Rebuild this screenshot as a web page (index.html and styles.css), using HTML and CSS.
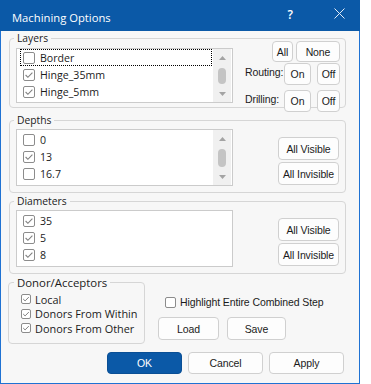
FILE: index.html
```html
<!DOCTYPE html>
<html>
<head>
<meta charset="utf-8">
<title>Machining Options</title>
<link rel="stylesheet" href="styles.css">
</head>
<body>
<div class="window">
  <div class="titlebar">
    <span class="title">Machining Options</span>
    <span class="help">?</span>
    <span class="close"><svg width="11" height="11" viewBox="0 0 11 11"><path d="M0.5 0.5L10.5 10.5M10.5 0.5L0.5 10.5" stroke="#e4ecf6" stroke-width="1" fill="none"/></svg></span>
  </div>
  <div class="client">
    <div class="group g-layers">
      <span class="legend">Layers</span>
      <div class="listbox lb-short">
        <div class="items">
          <div class="item focus"><span class="cb"></span>Border</div>
          <div class="item"><span class="cb"><svg width="10" height="10" viewBox="0 0 10 10"><path d="M1.6 5L3.9 7.3L8.4 2.6" stroke="#808080" stroke-width="1.1" fill="none"/></svg></span>Hinge_35mm</div>
          <div class="item"><span class="cb"><svg width="10" height="10" viewBox="0 0 10 10"><path d="M1.6 5L3.9 7.3L8.4 2.6" stroke="#808080" stroke-width="1.1" fill="none"/></svg></span>Hinge_5mm</div>
        </div>
        <div class="scrollbar">
          <span class="sb-btn"><svg width="7" height="4" viewBox="0 0 7 4"><polygon points="0,4 3.5,0 7,4" fill="#a3a3a3"/></svg></span>
          <span class="thumb"></span>
          <span class="sb-btn"><svg width="7" height="4" viewBox="0 0 7 4"><polygon points="0,0 3.5,4 7,0" fill="#a3a3a3"/></svg></span>
        </div>
      </div>
      <div class="layer-ctrls">
        <div class="ctl-row r1"><button class="btn b-all">All</button><button class="btn b-none">None</button></div>
        <div class="ctl-row r2"><span class="lbl">Routing:</span><button class="btn b-on">On</button><button class="btn b-off">Off</button></div>
        <div class="ctl-row r3"><span class="lbl">Drilling:</span><button class="btn b-on">On</button><button class="btn b-off">Off</button></div>
      </div>
    </div>

    <div class="group g-list">
      <span class="legend">Depths</span>
      <div class="listbox lb-tall">
        <div class="items pad1">
          <div class="item"><span class="cb"></span>0</div>
          <div class="item"><span class="cb"><svg width="10" height="10" viewBox="0 0 10 10"><path d="M1.6 5L3.9 7.3L8.4 2.6" stroke="#808080" stroke-width="1.1" fill="none"/></svg></span>13</div>
          <div class="item"><span class="cb"></span>16.7</div>
        </div>
        <div class="scrollbar">
          <span class="sb-btn"><svg width="7" height="4" viewBox="0 0 7 4"><polygon points="0,4 3.5,0 7,4" fill="#a3a3a3"/></svg></span>
          <span class="thumb thumb-tall"></span>
          <span class="sb-btn"><svg width="7" height="4" viewBox="0 0 7 4"><polygon points="0,0 3.5,4 7,0" fill="#a3a3a3"/></svg></span>
        </div>
      </div>
      <div class="vis-ctrls">
        <button class="btn b-vis">All Visible</button>
        <button class="btn b-vis">All Invisible</button>
      </div>
    </div>

    <div class="group g-list g-diam">
      <span class="legend">Diameters</span>
      <div class="listbox lb-tall">
        <div class="items pad1">
          <div class="item"><span class="cb"><svg width="10" height="10" viewBox="0 0 10 10"><path d="M1.6 5L3.9 7.3L8.4 2.6" stroke="#808080" stroke-width="1.1" fill="none"/></svg></span>35</div>
          <div class="item"><span class="cb"><svg width="10" height="10" viewBox="0 0 10 10"><path d="M1.6 5L3.9 7.3L8.4 2.6" stroke="#808080" stroke-width="1.1" fill="none"/></svg></span>5</div>
          <div class="item"><span class="cb"><svg width="10" height="10" viewBox="0 0 10 10"><path d="M1.6 5L3.9 7.3L8.4 2.6" stroke="#808080" stroke-width="1.1" fill="none"/></svg></span>8</div>
        </div>
      </div>
      <div class="vis-ctrls">
        <button class="btn b-vis">All Visible</button>
        <button class="btn b-vis">All Invisible</button>
      </div>
    </div>

    <div class="bottom">
      <div class="group g-donor">
        <span class="legend legend-donor">Donor/Acceptors</span>
        <div class="d-item"><span class="cb cb-small"><svg width="8" height="8" viewBox="0 0 8 8"><path d="M1.2 4L3.1 5.9L6.8 2.1" stroke="#808080" stroke-width="1" fill="none"/></svg></span>Local</div>
        <div class="d-item"><span class="cb cb-small"><svg width="8" height="8" viewBox="0 0 8 8"><path d="M1.2 4L3.1 5.9L6.8 2.1" stroke="#808080" stroke-width="1" fill="none"/></svg></span>Donors From Within</div>
        <div class="d-item"><span class="cb cb-small"><svg width="8" height="8" viewBox="0 0 8 8"><path d="M1.2 4L3.1 5.9L6.8 2.1" stroke="#808080" stroke-width="1" fill="none"/></svg></span>Donors From Other</div>
      </div>
      <div class="side">
        <div class="hl"><span class="cb cb-hl"></span>Highlight Entire Combined Step</div>
        <div class="ls">
          <button class="btn b-load">Load</button>
          <button class="btn b-save">Save</button>
        </div>
      </div>
    </div>

    <div class="footer">
      <button class="btn b-foot b-ok">OK</button>
      <button class="btn b-foot">Cancel</button>
      <button class="btn b-foot">Apply</button>
    </div>
  </div>
</div>
</body>
</html>
```

FILE: styles.css
```css
html, body {
  margin: 0;
  padding: 0;
  background: #ffffff;
}

.window {
  width: 360px;
  height: 384px;
  box-sizing: border-box;
  border: 1px solid #1f72d3;
  border-top: 0;
  background: #f7f7f7;
  display: flex;
  flex-direction: column;
  font-family: "Open Sans", "Noto Sans", sans-serif;
  color: #1b1b1b;
}

.titlebar {
  height: 31px;
  margin: 0 -1px;
  background: #0b59a7;
  display: flex;
  align-items: center;
  padding-right: 15px;
  color: #ffffff;
}

.title {
  margin-left: 12px;
  font-size: 11.25px;
  line-height: 16px;
  padding-top: 4px;
}

.help {
  margin-left: auto;
  font-size: 12px;
  font-weight: 600;
  line-height: 14px;
  margin-top: -2px;
}

.close {
  margin-left: 41px;
  display: flex;
  margin-top: -4px;
}

.client {
  flex: 1;
  display: flex;
  flex-direction: column;
  padding: 7px 15px 0 8px;
}

.group {
  position: relative;
  box-sizing: border-box;
  border: 1px solid #d6d6d6;
  border-radius: 4px;
  display: flex;
  align-items: flex-start;
  width: 337px;
}

.legend {
  position: absolute;
  top: -8px;
  left: 4px;
  padding: 0 3px;
  background: #f7f7f7;
  font-size: 10.3px;
  line-height: 15px;
  color: #1b1b1b;
}

.g-layers {
  height: 70px;
  padding: 2px 5px 0 6px;
}

.g-layers .listbox {
  margin-top: 7px;
}

.g-list {
  height: 73px;
  margin-top: 12px;
  padding: 8px 5px 0 6px;
}

.g-diam {
  margin-top: 8px;
}

.listbox {
  box-sizing: border-box;
  width: 217px;
  background: #ffffff;
  border: 1px solid #cbcbcb;
  display: flex;
}

.lb-short {
  height: 55px;
}

.lb-tall {
  height: 57px;
}

.items {
  flex: 1;
  padding-left: 3px;
  margin-right: 1px;
}

.items.pad1 {
  padding-top: 1px;
}

.item {
  box-sizing: border-box;
  height: 17px;
  display: flex;
  align-items: center;
  padding-left: 2px;
  border: 1px dotted transparent;
  font-size: 10.6px;
  color: #1b1b1b;
}

.item.focus {
  border-color: #000000;
}

.cb {
  box-sizing: border-box;
  width: 12px;
  height: 12px;
  border: 1px solid #8c8c8c;
  border-radius: 2px;
  background: #ffffff;
  display: flex;
  align-items: center;
  justify-content: center;
  margin-right: 5px;
  flex-shrink: 0;
}

.scrollbar {
  width: 18px;
  margin-right: 1px;
  background: #f0f0f0;
  display: flex;
  flex-direction: column;
  justify-content: space-between;
  align-items: center;
}

.sb-btn {
  height: 17px;
  display: flex;
  align-items: center;
  justify-content: center;
}

.thumb {
  width: 8px;
  height: 16px;
  border-radius: 4px;
  background: #c4c4c4;
}

.thumb-tall {
  height: 18px;
}

.btn {
  box-sizing: border-box;
  margin: 0;
  padding: 0;
  background: #fdfdfd;
  border: 1px solid #d0d0d0;
  border-radius: 4px;
  font-family: "Liberation Sans", Arial, sans-serif;
  font-size: 10.5px;
  letter-spacing: -0.1px;
  color: #1b1b1b;
  display: flex;
  align-items: center;
  justify-content: center;
}

.layer-ctrls {
  margin-left: auto;
  width: 95px;
  display: flex;
  flex-direction: column;
}

.ctl-row {
  display: flex;
  justify-content: flex-end;
  align-items: flex-start;
}

.r1 {
  height: 21px;
  gap: 3px;
}

.r2 {
  margin-top: 1px;
  height: 22px;
}

.r3 {
  margin-top: 5px;
  height: 22px;
}

.b-all {
  width: 21px;
  height: 21px;
}

.b-none {
  width: 44px;
  height: 21px;
}

.lbl {
  font-family: "Liberation Sans", Arial, sans-serif;
  font-size: 10.5px;
  letter-spacing: -0.1px;
  line-height: 18px;
  margin-right: auto;
}

.b-on {
  width: 27px;
  height: 22px;
  margin-right: 6px;
}

.b-off {
  width: 23px;
  height: 22px;
}

.vis-ctrls {
  margin-left: auto;
  margin-right: 1px;
  margin-top: 8px;
  display: flex;
  flex-direction: column;
  gap: 2px;
}

.b-vis {
  width: 61px;
  height: 23px;
}

.bottom {
  display: flex;
  margin-top: 8px;
}

.g-donor {
  width: 137px;
  height: 62px;
  margin-left: -1px;
  flex-direction: column;
  padding: 9px 0 0 12px;
}

.legend-donor {
  left: 5px;
  font-size: 11.4px;
}

.d-item {
  height: 14.5px;
  display: flex;
  align-items: center;
  font-size: 10.9px;
  color: #1b1b1b;
}

.cb-small {
  width: 10px;
  height: 10px;
  margin-right: 4px;
}

.side {
  display: flex;
  flex-direction: column;
  margin-left: 13px;
  padding-top: 13px;
}

.hl {
  height: 14px;
  display: flex;
  align-items: center;
  padding-left: 7px;
  font-family: "Liberation Sans", Arial, sans-serif;
  font-size: 10.5px;
  letter-spacing: -0.1px;
}

.cb-hl {
  width: 11px;
  height: 11px;
  margin-right: 4px;
}

.ls {
  display: flex;
  gap: 8px;
  margin-top: 8px;
}

.b-load {
  width: 61px;
  height: 23px;
}

.b-save {
  width: 59px;
  height: 23px;
}

.footer {
  display: flex;
  justify-content: flex-end;
  gap: 6px;
  margin-top: 8px;
}

.b-foot {
  width: 75px;
  height: 22px;
}

.b-ok {
  background: #0b59a7;
  border-color: #0a4f95;
  color: #ffffff;
}
```
